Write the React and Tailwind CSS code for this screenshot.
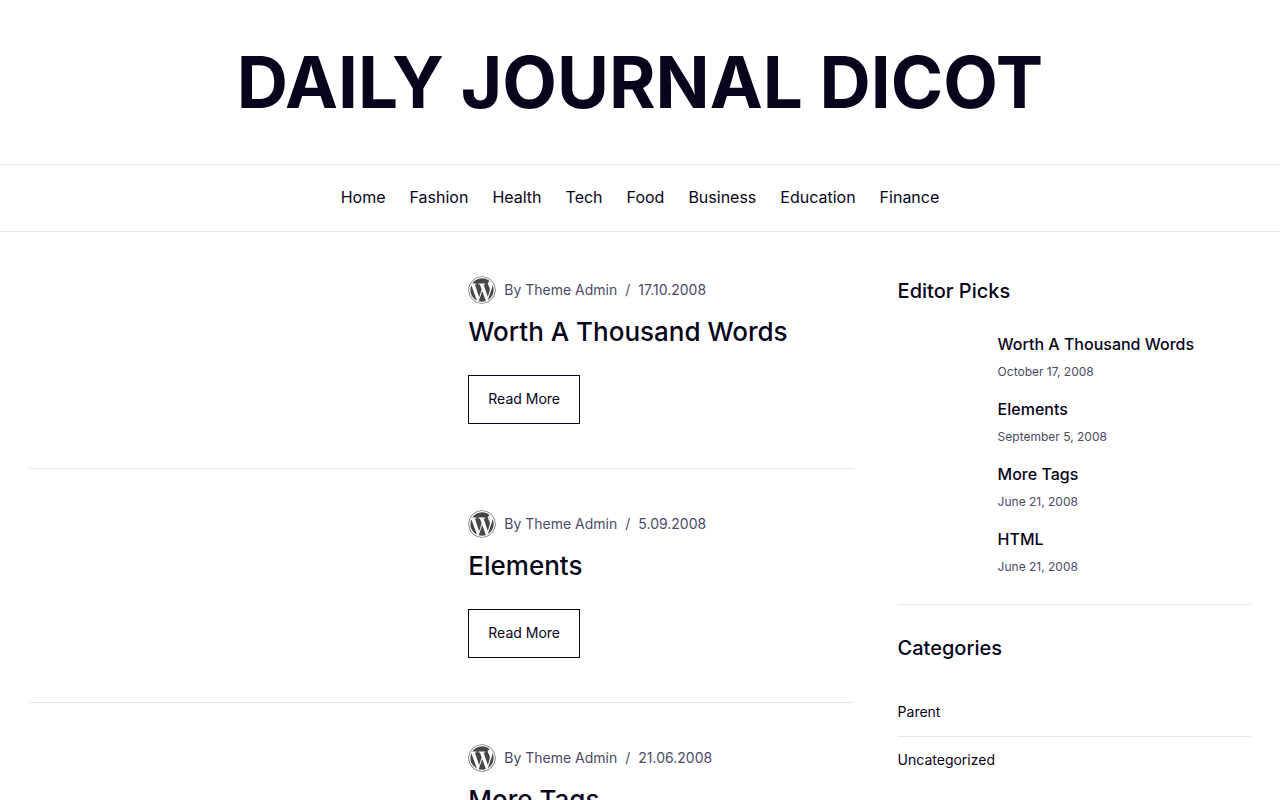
import { FaWordpress } from 'react-icons/fa';

const menu = ['Home', 'Fashion', 'Health', 'Tech', 'Food', 'Business', 'Education', 'Finance'];

const posts = [
  { title: 'Worth A Thousand Words', date: '17.10.2008' },
  { title: 'Elements', date: '5.09.2008' },
  { title: 'More Tags', date: '21.06.2008' },
];

const picks = [
  { title: 'Worth A Thousand Words', date: 'October 17, 2008' },
  { title: 'Elements', date: 'September 5, 2008' },
  { title: 'More Tags', date: 'June 21, 2008' },
  { title: 'HTML', date: 'June 21, 2008' },
];

const categories = ['Parent', 'Uncategorized'];

function Post({ post }) {
  return (
    <article className="grid grid-cols-[395fr_385fr] gap-11 border-b border-[#e6e6e6] pb-11">
      <div />
      <div>
        <div className="flex items-center text-sm leading-7 text-[#4a4a68]">
          <FaWordpress className="size-7 text-[#464646]" aria-hidden="true" />
          <a href="#" className="ml-2">By Theme Admin</a>
          <span className="mx-2">/</span>
          <time>{post.date}</time>
        </div>
        <h2 className="mt-2 text-[26px] leading-[39px] font-medium">
          <a href="#">{post.title}</a>
        </h2>
        <a href="#" className="mt-6 block w-fit border border-[#08041c] px-[19px] pt-[11px] pb-[13px] text-sm leading-[23px]">
          Read More
        </a>
      </div>
    </article>
  );
}

export default function App() {
  return (
    <div className="bg-white font-['Inter',sans-serif] text-[#08041c]">
      <header>
        <h1 className="py-9 text-center text-[71px] leading-[92px] font-bold">
          <a href="#">DAILY JOURNAL DICOT</a>
        </h1>
        <nav className="flex flex-wrap justify-center gap-x-6 border-y border-[#e6e6e6] pt-5 pb-[22px] text-base leading-6">
          {menu.map(item => (
            <a key={item} href="#">{item}</a>
          ))}
        </nav>
      </header>

      <div className="grid grid-cols-[7fr_3fr] gap-11 px-[29px] pt-11">
        <main className="flex flex-col gap-[41px]">
          {posts.map(post => (
            <Post key={post.title} post={post} />
          ))}
        </main>

        <aside>
          <section className="border-b border-[#e6e6e6] pb-[25px]">
            <h3 className="text-xl leading-[30px] font-medium">Editor Picks</h3>
            <ul className="mt-[26px] flex flex-col gap-[13px] pl-[100px]">
              {picks.map(pick => (
                <li key={pick.title}>
                  <h4 className="text-base leading-6 font-medium"><a href="#">{pick.title}</a></h4>
                  <time className="mt-1 block text-xs leading-6 text-[#4a4a68]">{pick.date}</time>
                </li>
              ))}
            </ul>
          </section>

          <section className="pt-7">
            <h3 className="text-xl leading-[30px] font-medium">Categories</h3>
            <ul className="mt-[26px] divide-y divide-[#e6e6e6] text-sm">
              {categories.map(category => (
                <li key={category} className="pt-[11px] pb-[13px] leading-[23px]">
                  <a href="#">{category}</a>
                </li>
              ))}
            </ul>
          </section>
        </aside>
      </div>
    </div>
  );
}
